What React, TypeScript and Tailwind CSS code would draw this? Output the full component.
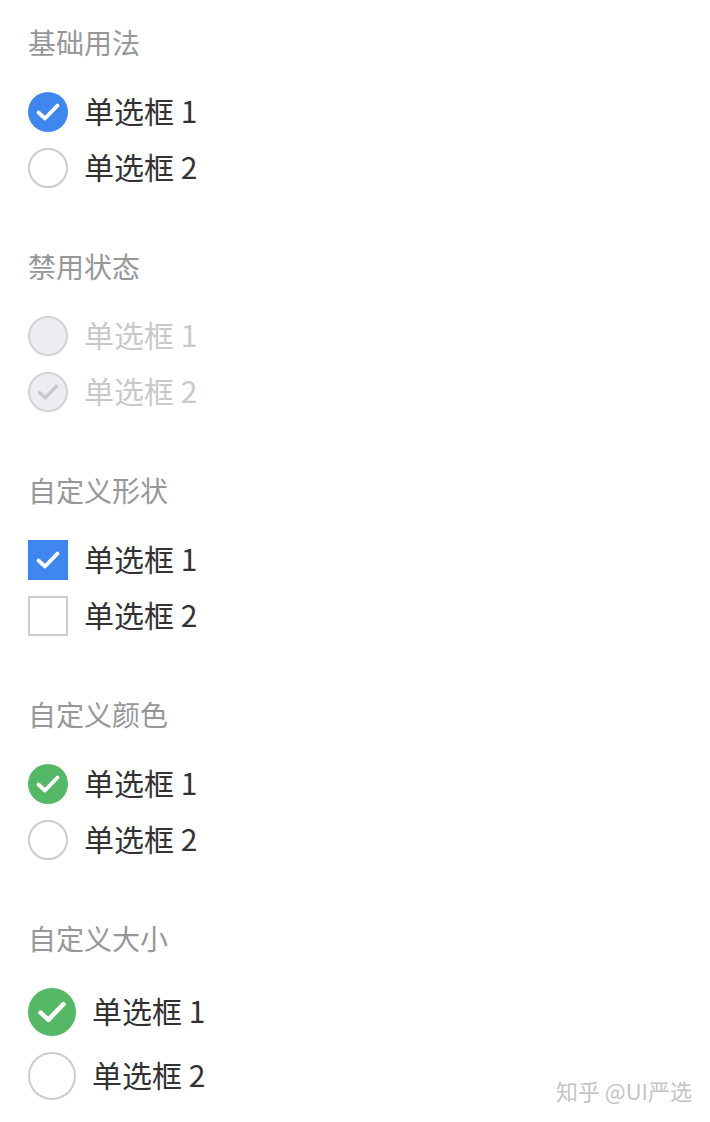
import React from 'react';

type Kind = 'round' | 'square';

const Check = ({ color, size }: { color: string; size: number }) => (
  <svg width={size} height={size} viewBox="0 0 40 40" fill="none">
    <path d="M10.5 20.5 L17 26.5 L29.5 13.5" stroke={color} strokeWidth="3.8" strokeLinecap="round" strokeLinejoin="round" />
  </svg>
);

const Radio: React.FC<{
  label: string;
  checked?: boolean;
  disabled?: boolean;
  kind?: Kind;
  color?: string;
  big?: boolean;
}> = ({ label, checked, disabled, kind = 'round', color = '#3f87ee', big }) => {
  const size = big ? 48 : 40;
  const shape = kind === 'round' ? 'rounded-full' : 'rounded-none';
  let box = 'border-2 border-[#cbcccf] bg-white';
  let style: React.CSSProperties | undefined;
  if (disabled) box = 'border-2 border-[#d3d4d7] bg-[#ebedf0]';
  if (checked && !disabled) {
    box = '';
    style = { backgroundColor: color };
  }
  return (
    <div className={`flex items-center ${big ? 'h-16' : 'h-14'}`}>
      <div
        className={`flex items-center justify-center shrink-0 box-border ${shape} ${box} ${big ? 'w-12 h-12' : 'w-10 h-10'}`}
        style={style}
      >
        {checked && <Check color={disabled ? '#c8c9cc' : '#ffffff'} size={size - (disabled ? 4 : 0)} />}
      </div>
      <span className={`ml-4 pb-1 text-[30px] leading-none ${disabled ? 'text-[#c8c9cc]' : 'text-[#323233]'}`}>{label}</span>
    </div>
  );
};

const Section: React.FC<{ title: string; children: React.ReactNode }> = ({ title, children }) => (
  <section className="mb-[52px]">
    <h2 className="h-10 pb-1 flex items-center text-[28px] text-[#969799] font-normal">{title}</h2>
    <div className="mt-5">{children}</div>
  </section>
);

export default function App() {
  return (
    <div
      className="relative w-[710px] h-[1122px] bg-white pl-7 pt-6 overflow-hidden"
      style={{ fontFamily: '"Noto Sans CJK SC", "Noto Sans", sans-serif' }}
    >
      <Section title="基础用法">
        <Radio label="单选框 1" checked />
        <Radio label="单选框 2" />
      </Section>
      <Section title="禁用状态">
        <Radio label="单选框 1" disabled />
        <Radio label="单选框 2" disabled checked />
      </Section>
      <Section title="自定义形状">
        <Radio label="单选框 1" checked kind="square" />
        <Radio label="单选框 2" kind="square" />
      </Section>
      <Section title="自定义颜色">
        <Radio label="单选框 1" checked color="#55b867" />
        <Radio label="单选框 2" />
      </Section>
      <Section title="自定义大小">
        <Radio label="单选框 1" checked color="#55b867" big />
        <Radio label="单选框 2" big />
      </Section>
      <div className="absolute right-[18px] top-[1074px] text-[22px] leading-8 text-[#c4c4c4]">知乎 @UI严选</div>
    </div>
  );
}
